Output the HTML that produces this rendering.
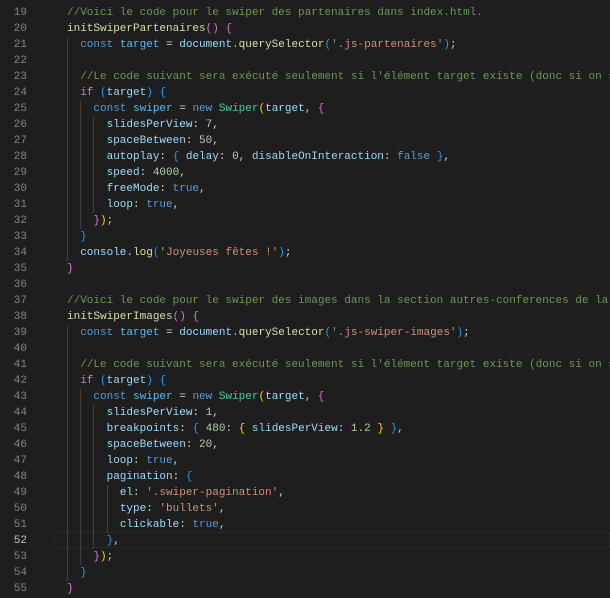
<!DOCTYPE html>
<html><head><meta charset="utf-8"><style>
body{margin:0;width:610px;height:598px;background:#1e1e1e;overflow:hidden;position:relative;font-family:"Liberation Mono","DejaVu Sans Mono",monospace;font-size:11px;}
.ln{position:absolute;left:0;width:27px;text-align:right;color:#858585;height:16px;line-height:16px}
.cd{position:absolute;left:54px;right:0;white-space:pre;color:#d4d4d4;height:16px;line-height:16px;overflow:hidden}
.g{position:absolute;width:1px;background:#404040}
.c{color:#6a9955}.f{color:#dcdcaa}.k{color:#569cd6}.v{color:#9cdcfe}.n{color:#4fc1ff}.i{color:#c586c0}.s{color:#ce9178}.m{color:#b5cea8}.t{color:#4ec9b0}
.b1{color:#ffd700}.b2{color:#da70d6}.b3{color:#179fff}
</style></head><body>
<div style="position:absolute;left:54px;right:0;top:532px;height:16px;box-sizing:border-box;border:1px solid #282828"></div>
<div class="g" style="left:67px;top:37px;height:224px"></div>
<div class="g" style="left:80px;top:101px;height:128px"></div>
<div class="g" style="left:93px;top:117px;height:96px"></div>
<div class="g" style="left:67px;top:325px;height:256px"></div>
<div class="g" style="left:80px;top:389px;height:176px"></div>
<div class="g" style="left:93px;top:405px;height:144px"></div>
<div class="g" style="left:107px;top:485px;height:48px"></div>
<div id="L"></div>
<script>
const L=[
'<span class="c">//Voici le code pour le swiper des partenaires dans index.html.</span>',
'<span class="f">initSwiperPartenaires</span><span class="b2">()</span> <span class="b2">{</span>',
'  <span class="k">const</span> <span class="n">target</span> = <span class="v">document</span>.<span class="f">querySelector</span><span class="b3">(</span><span class="s">\'.js-partenaires\'</span><span class="b3">)</span>;',
'',
'  <span class="c">//Le code suivant sera exécuté seulement si l\'élément target existe (donc si on se trouve sur la page)</span>',
'  <span class="i">if</span> <span class="b3">(</span><span class="v">target</span><span class="b3">)</span> <span class="b3">{</span>',
'    <span class="k">const</span> <span class="n">swiper</span> = <span class="k">new</span> <span class="t">Swiper</span><span class="b1">(</span><span class="v">target</span>, <span class="b2">{</span>',
'      <span class="v">slidesPerView</span>: <span class="m">7</span>,',
'      <span class="v">spaceBetween</span>: <span class="m">50</span>,',
'      <span class="v">autoplay</span>: <span class="b3">{</span> <span class="v">delay</span>: <span class="m">0</span>, <span class="v">disableOnInteraction</span>: <span class="k">false</span> <span class="b3">}</span>,',
'      <span class="v">speed</span>: <span class="m">4000</span>,',
'      <span class="v">freeMode</span>: <span class="k">true</span>,',
'      <span class="v">loop</span>: <span class="k">true</span>,',
'    <span class="b2">}</span><span class="b1">)</span>;',
'  <span class="b3">}</span>',
'  <span class="v">console</span>.<span class="f">log</span><span class="b3">(</span><span class="s">\'Joyeuses fêtes !\'</span><span class="b3">)</span>;',
'<span class="b2">}</span>',
'',
'<span class="c">//Voici le code pour le swiper des images dans la section autres-conferences de la page</span>',
'<span class="f">initSwiperImages</span><span class="b2">()</span> <span class="b2">{</span>',
'  <span class="k">const</span> <span class="n">target</span> = <span class="v">document</span>.<span class="f">querySelector</span><span class="b3">(</span><span class="s">\'.js-swiper-images\'</span><span class="b3">)</span>;',
'',
'  <span class="c">//Le code suivant sera exécuté seulement si l\'élément target existe (donc si on se trouve sur la page)</span>',
'  <span class="i">if</span> <span class="b3">(</span><span class="v">target</span><span class="b3">)</span> <span class="b3">{</span>',
'    <span class="k">const</span> <span class="n">swiper</span> = <span class="k">new</span> <span class="t">Swiper</span><span class="b1">(</span><span class="v">target</span>, <span class="b2">{</span>',
'      <span class="v">slidesPerView</span>: <span class="m">1</span>,',
'      <span class="v">breakpoints</span>: <span class="b3">{</span> <span class="m">480</span>: <span class="b1">{</span> <span class="v">slidesPerView</span>: <span class="m">1.2</span> <span class="b1">}</span> <span class="b3">}</span>,',
'      <span class="v">spaceBetween</span>: <span class="m">20</span>,',
'      <span class="v">loop</span>: <span class="k">true</span>,',
'      <span class="v">pagination</span>: <span class="b3">{</span>',
'        <span class="v">el</span>: <span class="s">\'.swiper-pagination\'</span>,',
'        <span class="v">type</span>: <span class="s">\'bullets\'</span>,',
'        <span class="v">clickable</span>: <span class="k">true</span>,',
'      <span class="b3">}</span>,',
'    <span class="b2">}</span><span class="b1">)</span>;',
'  <span class="b3">}</span>',
'<span class="b2">}</span>'];
let h='';
L.forEach((s,i)=>{const y=5+16*i;const n=19+i;
h+='<div class="ln" style="top:'+y+'px'+(n==52?';color:#c6c6c6':'')+'">'+n+'</div><div class="cd" style="left:67px;top:'+y+'px">'+s+'</div>';});
document.getElementById('L').innerHTML=h;
</script>
</body></html>
